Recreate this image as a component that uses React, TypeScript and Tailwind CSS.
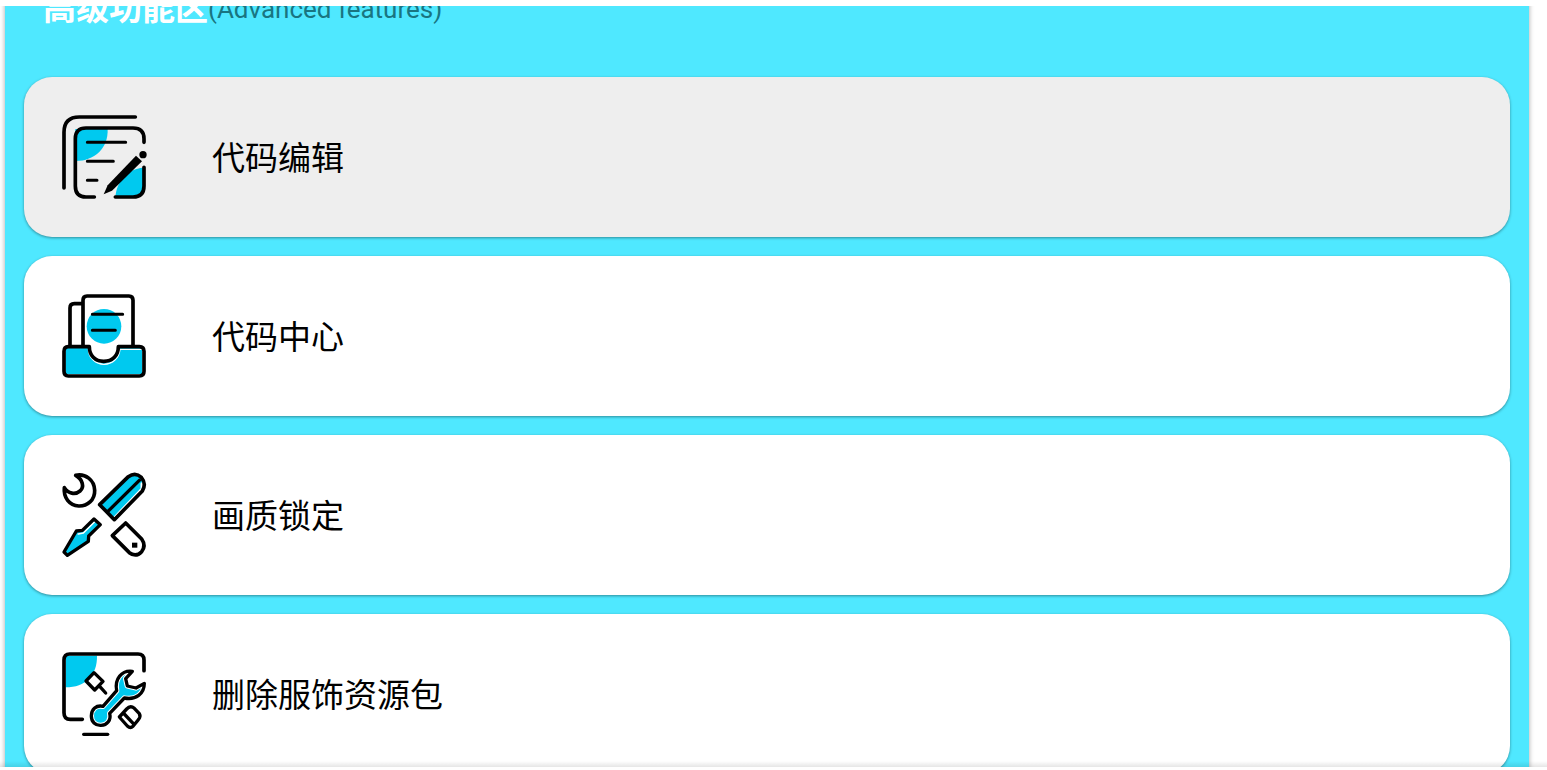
import type { ReactNode } from "react";

const Icon = ({ children }: { children: ReactNode }) => (
  <svg
    viewBox="0 0 300 300"
    className="size-[100px] shrink-0"
    fill="none"
    stroke="#000"
    strokeWidth="11"
    strokeLinecap="round"
    strokeLinejoin="round"
    aria-hidden="true"
  >
    {children}
  </svg>
);

const EditIcon = () => (
  <Icon>
    <path d="M64 66H161C163 122 124 162 64 162Z" fill="#00c9ef" stroke="none" />
    <path d="M184 270C188 222 220 185 268 182V256L256 270Z" fill="#00c9ef" stroke="none" />
    <path d="M30 243V76Q30 30 76 30H244" />
    <path d="M121 270H96Q64 270 64 237V95Q64 63 96 63H237Q270 63 270 95V106" />
    <path d="M270 181V237Q270 270 237 270H184" />
    <path d="M100 106H215M100 163H178M100 220H129" strokeWidth="9" />
    <path d="M149 262L161 235L246 146L264 163L174 251Z" fill="#000" stroke="none" />
    <circle cx="267" cy="143" r="11" fill="#000" stroke="none" />
  </Icon>
);

const CenterIcon = () => (
  <Icon>
    <path d="M34 186H102C108 212 123 231 149 231C176 231 191 212 197 186H264V264H34Z" fill="#00c9ef" stroke="none" />
    <circle cx="150" cy="121" r="52" fill="#00c9ef" stroke="none" />
    <path d="M48 180V66Q48 53 61 53H84" />
    <path d="M87 180V43Q87 30 99 30H225Q237 30 237 43V180" />
    <path d="M115 85H206M115 133H184" strokeWidth="9" />
    <path d="M103 190C105 216 125 235 150 235C176 235 195 216 198 190H262" stroke="#fff" strokeWidth="4" />
    <path d="M43 182H106C106 208 123 226 149 226C176 226 193 208 193 182H256Q270 182 270 196V256Q270 270 256 270H43Q30 270 30 256V196Q30 182 43 182Z" />
  </Icon>
);

const ToolsIcon = () => (
  <Icon>
    <path d="M65 31C94 25 121 44 122 76C123 105 100 124 74 123C46 121 28 98 31 68C42 86 64 90 78 78C92 66 86 43 65 31Z" />
    <path d="M137 119L223 35Q244 20 262 37Q278 56 265 78L181 164Z" fill="#00c9ef" stroke="none" />
    <path d="M264 56V72L184 156" stroke="#fff" strokeWidth="9" />
    <path d="M137 119L223 35Q244 20 262 37Q278 56 265 78L181 164Z" />
    <path d="M161 140L256 46" strokeWidth="10" />
    <path d="M120 162L139 179L104 213L103 229L40 271L30 261L67 198L85 196Z" fill="#00c9ef" stroke="none" />
    <path d="M122 170L88 204L73 207" stroke="#fff" strokeWidth="5" />
    <path d="M120 162L139 179L104 213L103 229L40 271L30 261L67 198L85 196Z" strokeWidth="10" />
    <path d="M215 174L263 222Q277 242 263 260Q246 278 226 263L175 212Z" />
    <rect x="234" y="233" width="16" height="15" fill="#000" stroke="none" />
  </Icon>
);

const WRENCH =
  "M235 82C203 78 181 105 188 140L147 187C127 182 112 196 112 216C112 234 124 245 141 244C160 244 172 228 167 208L211 162C246 169 271 149 271 118L246 132L220 126L215 104Z";

const RemoveIcon = () => (
  <Icon>
    <path d="M35 35H129C130 94 94 130 35 130Z" fill="#00c9ef" stroke="none" />
    <path d="M85 226H49Q30 226 30 206V48Q30 30 47 30H252Q270 30 270 48V80" />
    <path d="M89 271H161" strokeWidth="10" />
    <path d="M120 86L147 112L122 138L96 111ZM137 127L155 147" strokeWidth="10" />
    <path d={WRENCH} fill="#00c9ef" stroke="#fff" strokeWidth="16" />
    <path d={WRENCH} strokeWidth="10" />
    <path d="M218 195Q229 183 241 193L256 209Q261 218 253 227L237 247Q229 254 220 246L196 219ZM208 207L238 239" strokeWidth="10" />
  </Icon>
);

const features = [
  { label: "代码编辑", icon: <EditIcon />, pressed: true },
  { label: "代码中心", icon: <CenterIcon />, pressed: false },
  { label: "画质锁定", icon: <ToolsIcon />, pressed: false },
  { label: "删除服饰资源包", icon: <RemoveIcon />, pressed: false },
];

const App = () => {
  return (
    <div className="flex h-screen flex-col overflow-hidden bg-white pt-1.5 pb-[3px] font-['Roboto','Noto_Sans_CJK_SC',sans-serif]">
      <main className="relative min-h-0 flex-1 overflow-hidden pr-[18px] pl-[5px]">
        <section className="bg-[#4fe8ff] px-[19px] pb-5 shadow-[0_2px_5px_rgba(0,0,0,0.35)]">
          <h2 className="-mt-[21px] mb-11 flex h-12 items-center pl-[19px] whitespace-nowrap">
            <span className="text-[33px] leading-12 font-bold text-white">高级功能区</span>
            <span className="text-[26px] leading-12 font-normal text-[#197581]">
              (Advanced features)
            </span>
          </h2>
          <ul className="flex flex-col gap-[19px]">
            {features.map(({ label, icon, pressed }) => (
              <li key={label}>
                <button
                  type="button"
                  className={`flex w-full items-center gap-[58px] rounded-[28px] p-[30px] text-left text-[33px] leading-12 text-black shadow-[0_1px_3px_rgba(0,0,0,0.4)] ${
                    pressed ? "bg-[#eeeeee]" : "bg-white"
                  }`}
                >
                  {icon}
                  <span className="pt-1">{label}</span>
                </button>
              </li>
            ))}
          </ul>
        </section>
        <div className="absolute inset-x-0 bottom-0 h-1.5 bg-linear-to-b from-transparent to-black/10" />
      </main>
    </div>
  );
};

export default App;
